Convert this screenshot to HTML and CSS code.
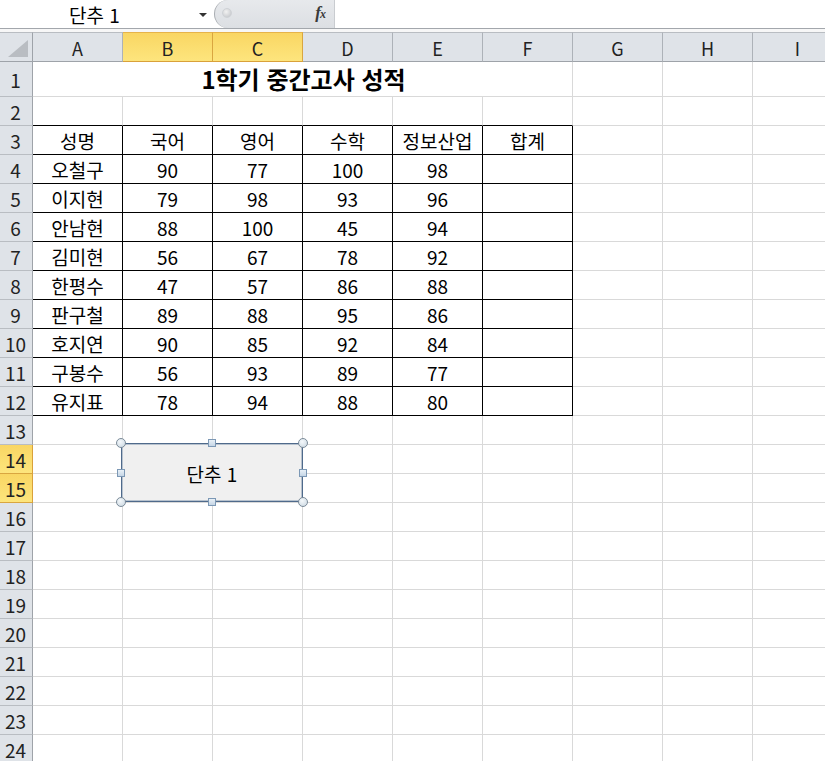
FILE: index.html
```html
<!DOCTYPE html>
<html lang="ko">
<head>
<meta charset="utf-8">
<title>1학기 중간고사 성적</title>
<link rel="stylesheet" href="styles.css">
</head>
<body>
<div class="topbar">
  <div class="namebox"><span class="name">단추 1</span><span class="drop"></span></div>
  <div class="fxbox"><span class="dot"></span><span class="fx">f<span class="fxx">x</span></span></div>
  <div class="formula"></div>
</div>
<div class="gap"></div>
<div class="sheet">
  <div class="corner"><span class="tri"></span></div>
  <div class="ch">A</div><div class="ch sel">B</div><div class="ch sel">C</div><div class="ch">D</div><div class="ch">E</div><div class="ch">F</div><div class="ch">G</div><div class="ch">H</div><div class="ch">I</div>

  <div class="rh">1</div><div class="c title">1학기 중간고사 성적</div><div class="c"></div><div class="c"></div><div class="c"></div>

  <div class="rh">2</div><div class="c tt"></div><div class="c tt"></div><div class="c tt"></div><div class="c tt"></div><div class="c tt"></div><div class="c tt"></div><div class="c"></div><div class="c"></div><div class="c"></div>

  <div class="rh">3</div><div class="c t">성명</div><div class="c t">국어</div><div class="c t">영어</div><div class="c t">수학</div><div class="c t">정보산업</div><div class="c t">합계</div><div class="c"></div><div class="c"></div><div class="c"></div>

  <div class="rh">4</div><div class="c t">오철구</div><div class="c t">90</div><div class="c t">77</div><div class="c t">100</div><div class="c t">98</div><div class="c t"></div><div class="c"></div><div class="c"></div><div class="c"></div>

  <div class="rh">5</div><div class="c t">이지현</div><div class="c t">79</div><div class="c t">98</div><div class="c t">93</div><div class="c t">96</div><div class="c t"></div><div class="c"></div><div class="c"></div><div class="c"></div>

  <div class="rh">6</div><div class="c t">안남현</div><div class="c t">88</div><div class="c t">100</div><div class="c t">45</div><div class="c t">94</div><div class="c t"></div><div class="c"></div><div class="c"></div><div class="c"></div>

  <div class="rh">7</div><div class="c t">김미현</div><div class="c t">56</div><div class="c t">67</div><div class="c t">78</div><div class="c t">92</div><div class="c t"></div><div class="c"></div><div class="c"></div><div class="c"></div>

  <div class="rh">8</div><div class="c t">한평수</div><div class="c t">47</div><div class="c t">57</div><div class="c t">86</div><div class="c t">88</div><div class="c t"></div><div class="c"></div><div class="c"></div><div class="c"></div>

  <div class="rh">9</div><div class="c t">판구철</div><div class="c t">89</div><div class="c t">88</div><div class="c t">95</div><div class="c t">86</div><div class="c t"></div><div class="c"></div><div class="c"></div><div class="c"></div>

  <div class="rh">10</div><div class="c t">호지연</div><div class="c t">90</div><div class="c t">85</div><div class="c t">92</div><div class="c t">84</div><div class="c t"></div><div class="c"></div><div class="c"></div><div class="c"></div>

  <div class="rh">11</div><div class="c t">구봉수</div><div class="c t">56</div><div class="c t">93</div><div class="c t">89</div><div class="c t">77</div><div class="c t"></div><div class="c"></div><div class="c"></div><div class="c"></div>

  <div class="rh">12</div><div class="c t">유지표</div><div class="c t">78</div><div class="c t">94</div><div class="c t">88</div><div class="c t">80</div><div class="c t"></div><div class="c"></div><div class="c"></div><div class="c"></div>

  <div class="rh">13</div><div class="c"></div><div class="c"></div><div class="c"></div><div class="c"></div><div class="c"></div><div class="c"></div><div class="c"></div><div class="c"></div><div class="c"></div>
  <div class="rh sel">14</div><div class="c"></div><div class="c"></div><div class="c"></div><div class="c"></div><div class="c"></div><div class="c"></div><div class="c"></div><div class="c"></div><div class="c"></div>
  <div class="rh sel">15</div><div class="c"></div><div class="c"></div><div class="c"></div><div class="c"></div><div class="c"></div><div class="c"></div><div class="c"></div><div class="c"></div><div class="c"></div>
  <div class="rh">16</div><div class="c"></div><div class="c"></div><div class="c"></div><div class="c"></div><div class="c"></div><div class="c"></div><div class="c"></div><div class="c"></div><div class="c"></div>
  <div class="rh">17</div><div class="c"></div><div class="c"></div><div class="c"></div><div class="c"></div><div class="c"></div><div class="c"></div><div class="c"></div><div class="c"></div><div class="c"></div>
  <div class="rh">18</div><div class="c"></div><div class="c"></div><div class="c"></div><div class="c"></div><div class="c"></div><div class="c"></div><div class="c"></div><div class="c"></div><div class="c"></div>
  <div class="rh">19</div><div class="c"></div><div class="c"></div><div class="c"></div><div class="c"></div><div class="c"></div><div class="c"></div><div class="c"></div><div class="c"></div><div class="c"></div>
  <div class="rh">20</div><div class="c"></div><div class="c"></div><div class="c"></div><div class="c"></div><div class="c"></div><div class="c"></div><div class="c"></div><div class="c"></div><div class="c"></div>
  <div class="rh">21</div><div class="c"></div><div class="c"></div><div class="c"></div><div class="c"></div><div class="c"></div><div class="c"></div><div class="c"></div><div class="c"></div><div class="c"></div>
  <div class="rh">22</div><div class="c"></div><div class="c"></div><div class="c"></div><div class="c"></div><div class="c"></div><div class="c"></div><div class="c"></div><div class="c"></div><div class="c"></div>
  <div class="rh">23</div><div class="c"></div><div class="c"></div><div class="c"></div><div class="c"></div><div class="c"></div><div class="c"></div><div class="c"></div><div class="c"></div><div class="c"></div>
  <div class="rh">24</div><div class="c"></div><div class="c"></div><div class="c"></div><div class="c"></div><div class="c"></div><div class="c"></div><div class="c"></div><div class="c"></div><div class="c"></div>

  <div class="button-obj">
    <div class="button-face">단추 1</div>
    <span class="h ci tl"></span><span class="h sq tm"></span><span class="h ci tr"></span>
    <span class="h sq ml"></span><span class="h sq mr"></span>
    <span class="h ci bl"></span><span class="h sq bm"></span><span class="h ci br"></span>
  </div>
</div>
</body>
</html>
```
FILE: styles.css
```css
html, body {
  margin: 0;
  padding: 0;
  background: #ffffff;
}
body {
  width: 825px;
  height: 761px;
  overflow: hidden;
  font-family: "Noto Sans CJK KR", "Noto Sans", sans-serif;
  color: #000;
}

/* formula bar */
.topbar {
  display: flex;
  height: 28px;
  border-bottom: 1px solid #a3a7ac;
  background: #fff;
}
.namebox {
  width: 214px;
  box-sizing: border-box;
  display: flex;
  align-items: center;
  padding-left: 69px;
  padding-right: 7px;
}
.name {
  font-size: 19px;
  line-height: 1;
  margin-top: 1px;
}
.drop {
  margin-left: auto;
  width: 0;
  height: 0;
  border-left: 4px solid transparent;
  border-right: 4px solid transparent;
  border-top: 4px solid #333;
  margin-top: 1px;
}
.fxbox {
  width: 121px;
  box-sizing: border-box;
  height: 28px;
  display: flex;
  align-items: center;
  background: linear-gradient(#e7e9ec, #dcdfe3);
  border-left: 1px solid #a9adb2;
  border-right: 1px solid #c9ccd0;
  border-radius: 14px 0 0 14px;
  padding-left: 7px;
  padding-right: 8px;
}
.dot {
  width: 8px;
  height: 8px;
  border-radius: 50%;
  background: radial-gradient(circle at 40% 35%, #f2f2f2, #bfc2c6);
  border: 1px solid #cfd2d6;
  margin-top: -2px;
}
.fx {
  margin-left: auto;
  font-family: "Liberation Serif", serif;
  font-style: italic;
  font-weight: bold;
  font-size: 17px;
  color: #3a3a3a;
  line-height: 1;
  margin-top: -3px;
}
.fxx {
  font-size: 12px;
  margin-left: -1px;
}
.formula {
  flex: 1;
}
.gap {
  height: 3px;
  background: #f7f7f7;
}

/* sheet grid */
.sheet {
  position: relative;
  display: grid;
  grid-template-columns: 33px repeat(9, 90px);
  grid-template-rows: 30px 35px repeat(23, 29px);
}
.sheet > div {
  box-sizing: border-box;
}
.c {
  border-right: 1px solid #d9d9d9;
  border-bottom: 1px solid #d9d9d9;
  display: flex;
  align-items: center;
  justify-content: center;
  font-size: 19px;
  line-height: 1;
  padding-top: 1px;
}
.title {
  grid-column: span 6;
  font-size: 24px;
  font-weight: bold;
  padding-top: 0;
  padding-left: 2px;
}
.tt {
  border-bottom-color: #000;
}
.t {
  border-right-color: #000;
  border-bottom-color: #000;
}

/* headers */
.corner {
  position: relative;
  background: #dfe3e8;
  border-top: 1px solid #b9bdc2;
  border-right: 1px solid #9ea3a9;
  border-bottom: 1px solid #9ea3a9;
}
.tri {
  position: absolute;
  right: 4px;
  bottom: 4px;
  width: 0;
  height: 0;
  border-left: 20px solid transparent;
  border-bottom: 17px solid #b9bdc2;
}
.ch {
  background: #dfe3e8;
  border-top: 1px solid #b9bdc2;
  border-right: 1px solid #adb2b8;
  border-bottom: 1px solid #9ea3a9;
  display: flex;
  align-items: center;
  justify-content: center;
  font-size: 18px;
  color: #222;
  line-height: 1;
  padding-top: 1px;
}
.ch.sel {
  background: linear-gradient(#f9d663, #fde57d);
  border-top-color: #e6b34a;
  border-right-color: #d9a640;
  border-bottom-color: #d9a13a;
}
.rh {
  background: #dfe3e8;
  border-right: 1px solid #9ea3a9;
  border-bottom: 1px solid #b9bdc2;
  display: flex;
  align-items: center;
  justify-content: center;
  font-size: 19px;
  color: #222;
  line-height: 1;
  padding-top: 1px;
  padding-right: 1px;
}
.rh.sel {
  background: linear-gradient(#f9d663, #fde57d);
  border-right-color: #d9a13a;
  border-bottom-color: #d9a640;
}

/* form button object */
.button-obj {
  position: absolute;
  left: 121px;
  top: 411px;
  width: 182px;
  height: 59px;
}
.button-face {
  box-sizing: border-box;
  width: 100%;
  height: 100%;
  background: #f0f0f0;
  border: 1px solid #4f6a8b;
  box-shadow: inset 0 0 0 0.5px #7f93ab;
  display: flex;
  align-items: center;
  justify-content: center;
  font-size: 19px;
  line-height: 1;
  padding-top: 1px;
}
.h {
  position: absolute;
  box-sizing: border-box;
  transform: translate(-50%, -50%);
}
.ci {
  width: 10px;
  height: 10px;
  border-radius: 50%;
  background: radial-gradient(circle at 40% 35%, #f4f8fb, #c9d6e0);
  border: 1px solid #7b8b99;
}
.sq {
  width: 8px;
  height: 8px;
  background: linear-gradient(#e8f0f7, #c6d6e6);
  border: 1px solid #7c98b5;
}
.tl { left: 0; top: 0; }
.tm { left: 50%; top: 0; }
.tr { left: 100%; top: 0; }
.ml { left: 0; top: 50%; }
.mr { left: 100%; top: 50%; }
.bl { left: 0; top: 100%; }
.bm { left: 50%; top: 100%; }
.br { left: 100%; top: 100%; }
```
